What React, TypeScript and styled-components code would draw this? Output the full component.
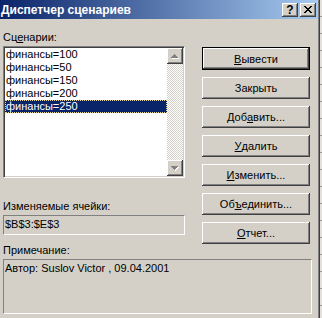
import React from 'react';
import styled, { createGlobalStyle, css } from 'styled-components';

const GlobalStyles = createGlobalStyle`
  html, body {
    margin: 0;
    padding: 0;
    background: #d4d0c8;
  }
  body {
    font-family: 'Liberation Sans', Arial, sans-serif;
    font-size: 11px;
    color: #000;
  }
`;

const raised = css`
  background: #d4d0c8;
  box-shadow: inset -1px -1px #404040, inset 1px 1px #ffffff,
    inset -2px -2px #808080, inset 2px 2px #d4d0c8;
`;

const Screen = styled.div`
  display: flex;
  width: 322px;
  height: 318px;
  overflow: hidden;
`;

const Frame = styled.div`
  border-right: 1px solid #404040;
`;

const Window = styled.div`
  width: 318px;
  height: 318px;
  background: #d4d0c8;
  border-right: 1px solid #808080;
  display: flex;
  flex-direction: column;
`;

const Behind = styled.div`
  flex: 1;
  background: repeating-linear-gradient(
    to bottom,
    #e4e1dc 0,
    #e4e1dc 16px,
    #9a9892 16px,
    #9a9892 17px
  );
`;

const TitleBar = styled.div`
  height: 19px;
  display: flex;
  align-items: center;
  padding: 0 2px 0 1px;
  background: linear-gradient(to right, #0a246a, #a6caf0);
`;

const Title = styled.div`
  flex: 1;
  color: #fff;
  font-weight: bold;
  font-size: 12px;
  white-space: nowrap;
`;

const CaptionButton = styled.div`
  ${raised};
  width: 16px;
  height: 14px;
  margin-left: 2px;
  display: flex;
  align-items: center;
  justify-content: center;
  font-weight: bold;
  font-size: 12px;
  line-height: 14px;
`;

const Body = styled.div`
  display: flex;
  flex-direction: column;
  padding: 12px 0 0 3px;
`;

const Top = styled.div`
  display: flex;
  align-items: flex-start;
`;

const LeftCol = styled.div`
  width: 182px;
  display: flex;
  flex-direction: column;
`;

const Label = styled.div<{ $gap?: number }>`
  line-height: 13px;
  height: 13px;
  margin-top: ${(p) => p.$gap || 0}px;
  margin-bottom: 2px;
  white-space: nowrap;
`;

const ListBox = styled.div`
  height: 132px;
  display: flex;
  background: #fff;
  box-sizing: border-box;
  border: 1px solid;
  border-color: #808080 #ffffff #ffffff #808080;
  box-shadow: inset 1px 1px #404040, inset -1px -1px #d4d0c8;
  padding: 1px;
`;

const Items = styled.div`
  flex: 1;
  display: flex;
  flex-direction: column;
`;

const Item = styled.div<{ $selected?: boolean }>`
  height: 13px;
  line-height: 13px;
  padding-left: 1px;
  white-space: nowrap;
  ${(p) =>
    p.$selected &&
    css`
      background: #0a246a;
      color: #fff;
      outline: 1px dotted #e8d898;
      outline-offset: -1px;
    `}
`;

const ScrollBar = styled.div`
  width: 16px;
  display: flex;
  flex-direction: column;
`;

const ScrollButton = styled.div`
  ${raised};
  width: 16px;
  height: 16px;
  display: flex;
  align-items: center;
  justify-content: center;
`;

const Track = styled.div`
  flex: 1;
  background-color: #fff;
  background-image: conic-gradient(
    #d4d0c8 25%,
    #fff 0 50%,
    #d4d0c8 0 75%,
    #fff 0
  );
  background-size: 2px 2px;
`;

const Field = styled.div<{ $height: number; $width: number }>`
  box-sizing: border-box;
  width: ${(p) => p.$width}px;
  height: ${(p) => p.$height}px;
  border: 1px solid;
  border-color: #808080 #ffffff #ffffff #808080;
  padding: 2px 0 0 1px;
  line-height: 13px;
  white-space: nowrap;
`;

const ButtonCol = styled.div`
  width: 108px;
  margin-left: 17px;
  padding-top: 16px;
  display: flex;
  flex-direction: column;
  gap: 7px;
`;

const Button = styled.div<{ $default?: boolean }>`
  ${raised};
  box-sizing: border-box;
  height: 22px;
  display: flex;
  align-items: center;
  justify-content: center;
  white-space: nowrap;
  ${(p) =>
    p.$default &&
    css`
      border: 1px solid #000;
      height: 23px;
    `}
`;

const Note = styled.div`
  display: flex;
  flex-direction: column;
  margin-top: 0;
`;

const UpArrow = () => (
  <svg width="8" height="5" viewBox="0 0 8 5" shapeRendering="crispEdges">
    <path d="M4 1h1v1h-1z M3 2h3v1h-3z M2 3h5v1h-5z M1 4h7v1h-7z" fill="#fff" />
    <path d="M3 0h1v1h-1z M2 1h3v1h-3z M1 2h5v1h-5z M0 3h7v1h-7z" fill="#808080" />
  </svg>
);

const DownArrow = () => (
  <svg width="8" height="5" viewBox="0 0 8 5" shapeRendering="crispEdges">
    <path d="M1 1h7v1h-7z M2 2h5v1h-5z M3 3h3v1h-3z M4 4h1v1h-1z" fill="#fff" />
    <path d="M0 0h7v1h-7z M1 1h5v1h-5z M2 2h3v1h-3z M3 3h1v1h-1z" fill="#808080" />
  </svg>
);

const CloseGlyph = () => (
  <svg width="8" height="7" viewBox="0 0 8 7" shapeRendering="crispEdges">
    <path
      d="M0 0h2v1h-2z M6 0h2v1h-2z M1 1h2v1h-2z M5 1h2v1h-2z M2 2h4v1h-4z M3 3h2v1h-2z M2 4h4v1h-4z M1 5h2v1h-2z M5 5h2v1h-2z M0 6h2v1h-2z M6 6h2v1h-2z"
      fill="#000"
    />
  </svg>
);

const scenarios = ['финансы=100', 'финансы=50', 'финансы=150', 'финансы=200', 'финансы=250'];

export default function App() {
  return (
    <Screen>
      <GlobalStyles />
      <Frame>
        <Window>
          <TitleBar>
            <Title>Диспетчер сценариев</Title>
            <CaptionButton>?</CaptionButton>
            <CaptionButton>
              <CloseGlyph />
            </CaptionButton>
          </TitleBar>
          <Body>
            <Top>
              <LeftCol>
                <Label>
                  Сц<u>е</u>нарии:
                </Label>
                <ListBox>
                  <Items>
                    {scenarios.map((s, i) => (
                      <Item key={s} $selected={i === scenarios.length - 1}>
                        {s}
                      </Item>
                    ))}
                  </Items>
                  <ScrollBar>
                    <ScrollButton>
                      <UpArrow />
                    </ScrollButton>
                    <Track />
                    <ScrollButton>
                      <DownArrow />
                    </ScrollButton>
                  </ScrollBar>
                </ListBox>
                <Label $gap={22}>Изменяемые ячейки:</Label>
                <Field $width={182} $height={20}>
                  $B$3:$E$3
                </Field>
              </LeftCol>
              <ButtonCol>
                <Button $default>
                  <u>В</u>ывести
                </Button>
                <Button>Закрыть</Button>
                <Button>
                  Доб<u>а</u>вить...
                </Button>
                <Button>
                  <u>У</u>далить
                </Button>
                <Button>
                  <u>И</u>зменить...
                </Button>
                <Button>
                  Об<u>ъ</u>единить...
                </Button>
                <Button>
                  <u>О</u>тчет...
                </Button>
              </ButtonCol>
            </Top>
            <Note>
              <Label>Примечание:</Label>
              <Field $width={309} $height={55}>
                Автор: Suslov Victor , 09.04.2001
              </Field>
            </Note>
          </Body>
        </Window>
      </Frame>
      <Behind />
    </Screen>
  );
}
